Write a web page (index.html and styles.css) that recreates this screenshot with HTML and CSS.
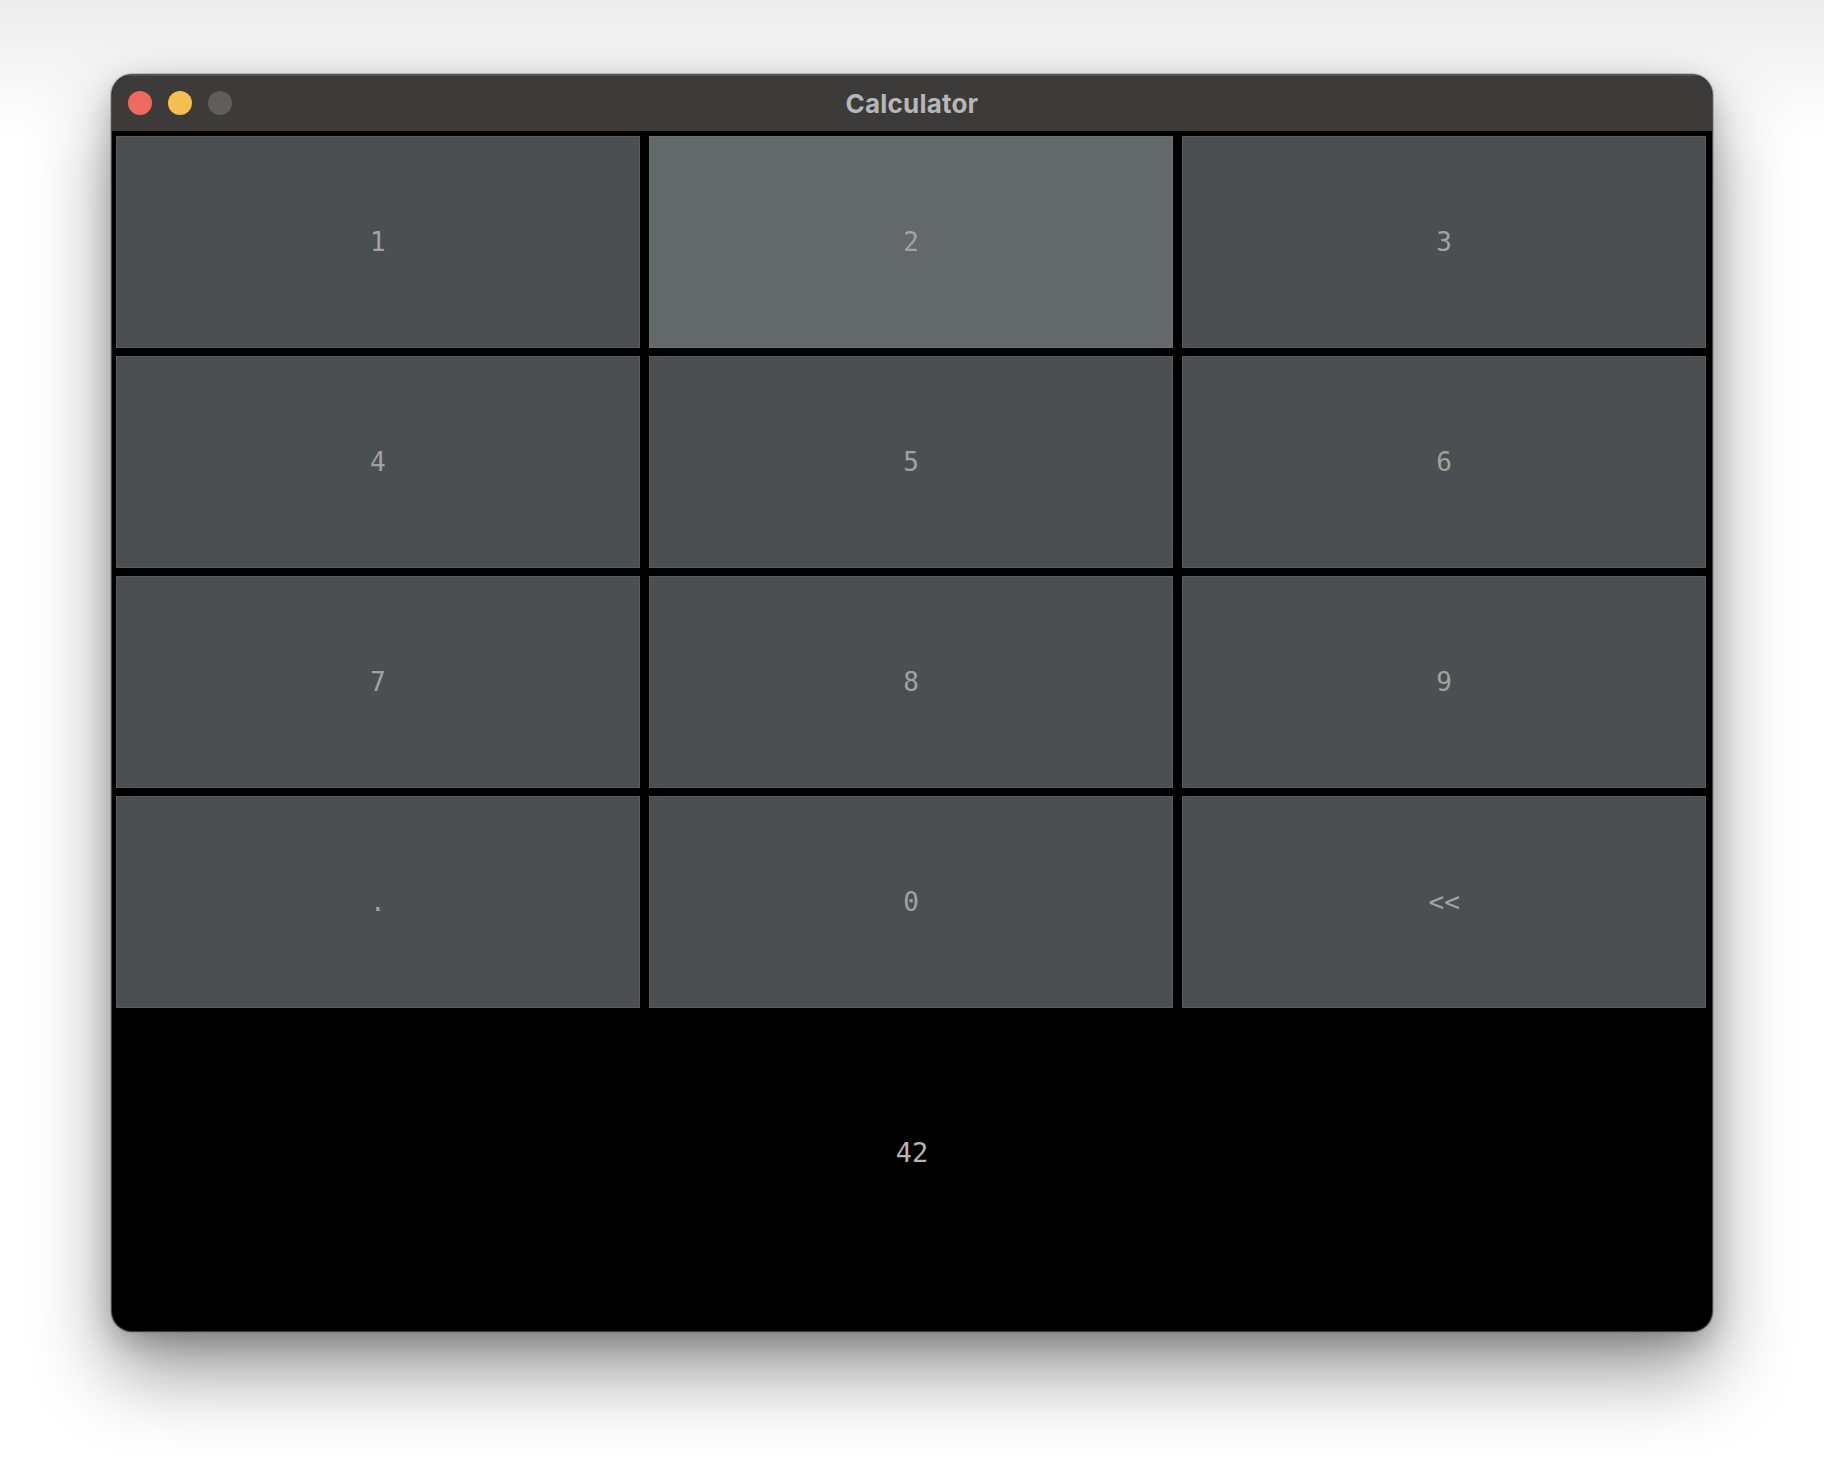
FILE: index.html
```html
<!DOCTYPE html>
<html>
<head>
<meta charset="utf-8">
<title>Calculator</title>
<link rel="stylesheet" href="styles.css">
</head>
<body>
<div class="stage">
  <div class="window">
    <div class="titlebar">
      <div class="lights">
        <span class="light red"></span>
        <span class="light yellow"></span>
        <span class="light gray"></span>
      </div>
      <div class="title">Calculator</div>
    </div>
    <div class="content">
      <div class="keys">
        <div class="key">1</div>
        <div class="key hover">2</div>
        <div class="key">3</div>
        <div class="key">4</div>
        <div class="key">5</div>
        <div class="key">6</div>
        <div class="key">7</div>
        <div class="key">8</div>
        <div class="key">9</div>
        <div class="key">.</div>
        <div class="key">0</div>
        <div class="key">&lt;&lt;</div>
      </div>
      <div class="display">42</div>
    </div>
  </div>
</div>
</body>
</html>
```
FILE: styles.css
```css
html, body {
  margin: 0;
  padding: 0;
  background: #ffffff;
}
.stage {
  width: 1824px;
  height: 1480px;
  padding: 75px 0 0 112px;
  box-sizing: border-box;
  background: linear-gradient(#ececec 0px, #f5f5f5 60px, #ffffff 140px);
}
.window {
  width: 1600px;
  height: 1256px;
  border-radius: 20px;
  overflow: hidden;
  background: #000;
  display: flex;
  flex-direction: column;
  box-shadow: 0 0 0 1px rgba(0,0,0,0.55), 0 0 0 2px rgba(110,110,110,0.35), 0 40px 80px rgba(0,0,0,0.42), 0 10px 30px rgba(0,0,0,0.22);
}
.titlebar {
  height: 56px;
  flex: none;
  background: #3d3b39;
  display: flex;
  align-items: center;
  position: relative;
  box-shadow: inset 0 1px 0 rgba(255,255,255,0.12);
}
.lights {
  display: flex;
  gap: 16px;
  padding-left: 16px;
  position: relative;
  z-index: 1;
}
.light {
  width: 24px;
  height: 24px;
  border-radius: 50%;
  display: block;
}
.red { background: #ee6a5f; }
.yellow { background: #f5bf4f; }
.gray { background: #5f5e5c; }
.title {
  position: absolute;
  left: 0;
  right: 0;
  top: 0;
  bottom: 0;
  display: flex;
  align-items: center;
  justify-content: center;
  font-family: Inter, "Liberation Sans", sans-serif;
  font-weight: 700;
  font-size: 26px;
  letter-spacing: 0.2px;
  color: #b6b6b6;
  padding-top: 1px;
}
.content {
  flex: 1;
  display: flex;
  flex-direction: column;
  padding: 5px 6px 0 4px;
}
.keys {
  display: grid;
  grid-template-columns: repeat(3, 1fr);
  grid-template-rows: repeat(4, 212px);
  column-gap: 9.5px;
  row-gap: 8px;
}
.key {
  background: #4b4f52;
  border: 1px solid #585c5f;
  box-sizing: border-box;
  display: flex;
  align-items: center;
  justify-content: center;
  font-family: "DejaVu Sans Mono", monospace;
  font-size: 26px;
  color: #a0a2a3;
}
.key.hover {
  background: #63686b;
  border-color: #6d7174;
}
.display {
  height: 288px;
  display: flex;
  align-items: center;
  justify-content: center;
  font-family: "DejaVu Sans Mono", monospace;
  font-size: 27px;
  color: #b4b4b4;
  padding-left: 2px;
}
```
